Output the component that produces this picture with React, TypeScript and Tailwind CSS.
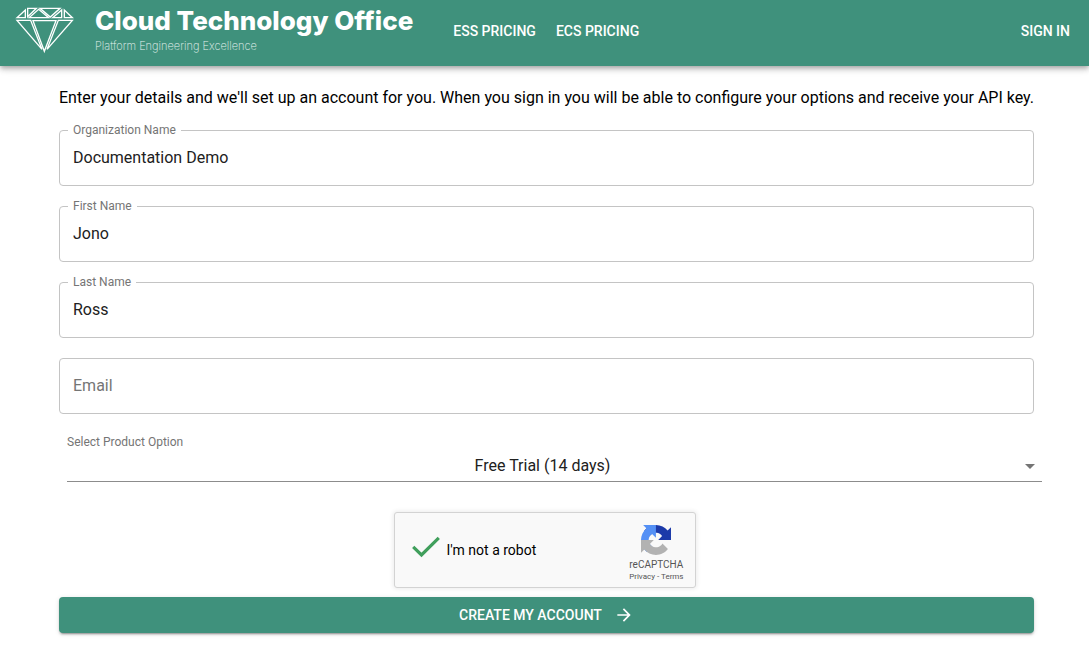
import React, { useId, useState } from "react";

function DiamondLogo() {
  return (
    <svg
      viewBox="30 16 180 141"
      className="h-[47px] w-[60px] shrink-0"
      fill="none"
      stroke="#fff"
      strokeWidth="4"
      strokeLinejoin="miter"
      aria-hidden="true"
    >
      <path d="M36 48 61 25V48Z" />
      <path d="M68 20H94L68 45Z" />
      <path d="M72 48 101 23 131 48Z" />
      <path d="M105 20H165L136 46Z" />
      <path d="M143 48 170 25V48Z" />
      <path d="M178 25V48H202Z" />
      <path d="M36 56H77L111 143Z" />
      <path d="M84 57H153L118 149Z" />
      <path d="M160 56H202L126 143Z" />
    </svg>
  );
}

function RecaptchaLogo() {
  return (
    <svg viewBox="0 0 64 64" className="h-[30px] w-[30px]" aria-hidden="true">
      <path
        fill="#1c3aa9"
        d="M64 31.955l-.033-1.37V4.687l-7.16 7.16C50.948 4.674 42.033.093 32.05.093c-10.4 0-19.622 4.96-25.458 12.64l11.736 11.86a15.55 15.55 0 0 1 4.754-5.334c2.05-1.6 4.952-2.906 8.968-2.906.485 0 .86.057 1.135.163 4.976.393 9.288 3.14 11.828 7.124l-8.307 8.307L64 31.953"
      />
      <path
        fill="#5490f5"
        d="M31.862.094l-1.37.033H4.594l7.16 7.16C4.58 13.147 0 22.06 0 32.046c0 10.4 4.96 19.622 12.64 25.458L24.5 45.768a15.55 15.55 0 0 1-5.334-4.754c-1.6-2.05-2.906-4.952-2.906-8.968 0-.485.057-.86.163-1.135.393-4.976 3.14-9.288 7.124-11.828l8.307 8.307L31.86.095"
      />
      <path
        fill="#b2b2b2"
        d="M.001 32.045l.033 1.37v25.898l7.16-7.16c5.86 7.173 14.774 11.754 24.76 11.754 10.4 0 19.622-4.96 25.458-12.64l-11.736-11.86a15.55 15.55 0 0 1-4.754 5.334c-2.05 1.6-4.952 2.906-8.968 2.906-.485 0-.86-.057-1.135-.163-4.976-.393-9.288-3.14-11.828-7.124l8.307-8.307c-10.522.04-22.4.066-27.295-.005"
      />
    </svg>
  );
}

type FieldProps = {
  label: string;
  initial?: string;
  type?: string;
};

function OutlinedField({ label, initial = "", type = "text" }: FieldProps) {
  const id = useId();
  const [value, setValue] = useState(initial);
  return (
    <div className="relative">
      <input
        id={id}
        type={type}
        value={value}
        onChange={(e) => setValue(e.target.value)}
        className="block h-14 w-full rounded border border-[#c4c4c4] bg-white px-[13px] pb-[2px] text-base text-[#212121] outline-none focus:border-[#3f917c]"
      />
      <label
        htmlFor={id}
        className={
          value
            ? "absolute -top-2 left-[9px] bg-white px-[5px] text-xs text-[#757575]"
            : "absolute top-4 left-[14px] text-base text-[#757575]"
        }
      >
        {label}
      </label>
    </div>
  );
}

export default function App() {
  const [verified, setVerified] = useState(true);
  return (
    <div className="min-h-screen bg-white font-[Roboto,sans-serif] text-black">
      <header className="flex h-[66px] items-start bg-[#3f917c] pr-[19px] pl-[15px] text-white shadow-[0_2px_4px_-1px_rgba(0,0,0,0.2),0_4px_5px_0_rgba(0,0,0,0.14),0_1px_10px_0_rgba(0,0,0,0.12)]">
        <a href="#home" className="flex gap-5 pt-[7px]">
          <DiamondLogo />
          <span className="flex flex-col font-[Inter,sans-serif] whitespace-nowrap">
            <span className="text-[26px] leading-7 font-extrabold">Cloud Technology Office</span>
            <span className="pt-[3px] text-[11px] leading-4 font-extralight text-[#e6f2ef]">
              Platform Engineering Excellence
            </span>
          </span>
        </a>
        <nav className="flex grow items-center gap-5 pt-[19px] pl-10 text-sm leading-6 font-medium uppercase">
          <a href="#ess">ESS Pricing</a>
          <a href="#ecs">ECS Pricing</a>
          <a href="#signin" className="ml-auto">
            Sign in
          </a>
        </nav>
      </header>

      <main className="pt-5 pr-[55px] pb-9 pl-[59px]">
        <form className="flex flex-col" onSubmit={(e) => e.preventDefault()}>
          <p className="-mr-4 text-base">
            Enter your details and we'll set up an account for you. When you sign in you will be able to configure your
            options and receive your API key.
          </p>
          <div className="flex flex-col gap-5 pt-5">
            <OutlinedField label="Organization Name" initial="Documentation Demo" />
            <OutlinedField label="First Name" initial="Jono" />
            <OutlinedField label="Last Name" initial="Ross" />
            <OutlinedField label="Email" type="email" />
          </div>

          <div className="-mr-2 ml-2 flex flex-col pt-5">
            <label htmlFor="product" className="text-xs leading-4 text-[#757575]">
              Select Product Option
            </label>
            <div className="relative">
              <select
                id="product"
                defaultValue="trial"
                className="block h-8 w-full appearance-none border-b border-[#8c8c8c] bg-transparent pr-6 text-center text-base text-[#212121] outline-none [text-align-last:center]"
              >
                <option value="trial">Free Trial (14 days)</option>
                <option value="standard">Standard</option>
              </select>
              <svg
                viewBox="0 0 24 24"
                className="pointer-events-none absolute top-1 right-0 h-6 w-6"
                fill="#757575"
                aria-hidden="true"
              >
                <path d="M7 10l5 5 5-5z" />
              </svg>
            </div>
          </div>

          <div className="mt-[30px] mr-1 flex h-[76px] w-[302px] items-center self-center rounded-[3px] border border-[#d3d3d3] bg-[#f9f9f9] pr-[11px] pl-[17px] shadow-[0_0_4px_1px_rgba(0,0,0,0.08)]">
            <label className="flex items-center gap-[7px] text-sm">
              <input
                type="checkbox"
                checked={verified}
                onChange={(e) => setVerified(e.target.checked)}
                className="peer sr-only"
              />
              <svg
                viewBox="0 0 28 22"
                className="mb-1.5 h-[22px] w-7 opacity-0 peer-checked:opacity-100"
                fill="none"
                stroke="#409f5c"
                strokeWidth="3.2"
                aria-hidden="true"
              >
                <path d="M1.2 10.8 9.5 19 26.8 1.8" />
              </svg>
              I'm not a robot
            </label>
            <div className="ml-auto flex flex-col items-center pt-[7px] text-[#555]">
              <RecaptchaLogo />
              <span className="pt-1 text-[10px] leading-3">reCAPTCHA</span>
              <span className="text-[8px] leading-3">
                <a href="#privacy">Privacy</a> - <a href="#terms">Terms</a>
              </span>
            </div>
          </div>

          <button
            type="submit"
            className="mt-[9px] flex h-9 w-full items-center justify-center gap-3 rounded bg-[#3f917c] text-sm font-medium text-white uppercase shadow-[0_3px_1px_-2px_rgba(0,0,0,0.2),0_2px_2px_0_rgba(0,0,0,0.14),0_1px_5px_0_rgba(0,0,0,0.12)]"
          >
            Create my account
            <svg viewBox="0 0 24 24" className="h-5 w-5" fill="currentColor" aria-hidden="true">
              <path d="M12 4l-1.41 1.41L16.17 11H4v2h12.17l-5.58 5.59L12 20l8-8z" />
            </svg>
          </button>
        </form>
      </main>
    </div>
  );
}
